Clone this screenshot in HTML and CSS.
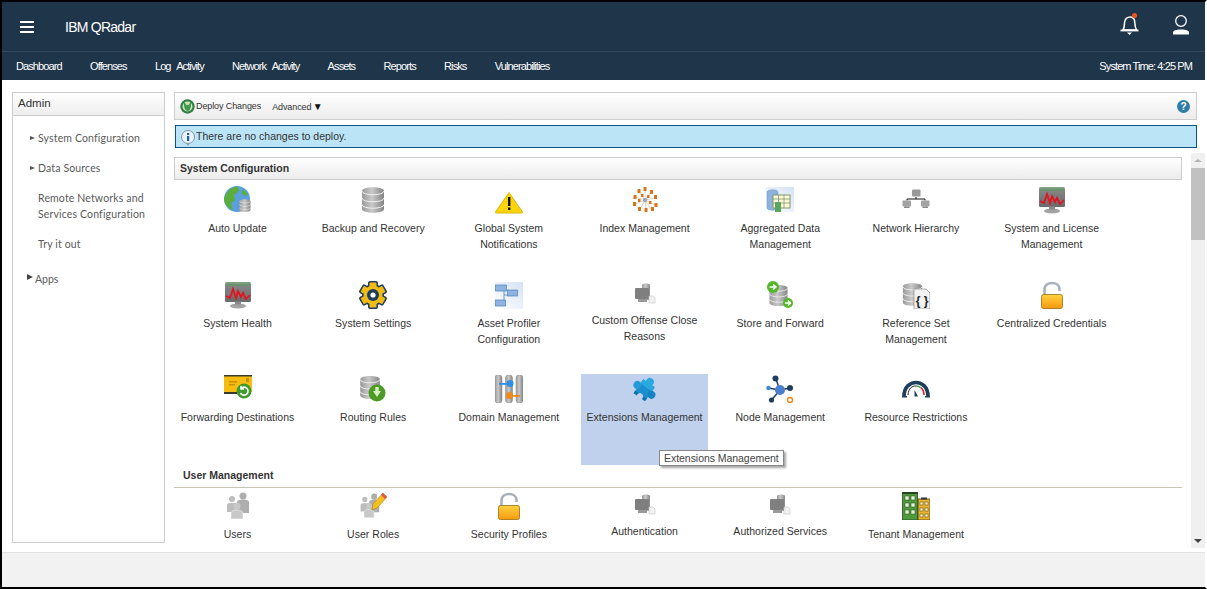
FILE: index.html
```html
<!DOCTYPE html>
<html lang="en">
<head>
<meta charset="utf-8">
<title>IBM QRadar</title>
<link rel="stylesheet" href="styles.css">
</head>
<body>
<svg class="defs" width="0" height="0" aria-hidden="true">
  <defs>
    <linearGradient id="gGrey" x1="0" x2="1" y1="0" y2="0"><stop offset="0" stop-color="#9a9a9a"/><stop offset=".45" stop-color="#c9c9c9"/><stop offset="1" stop-color="#858585"/></linearGradient>
    <linearGradient id="gLock" x1="0" x2="0" y1="0" y2="1"><stop offset="0" stop-color="#ffd23f"/><stop offset="1" stop-color="#f59a0e"/></linearGradient>
    <linearGradient id="gPale" x1="0" x2="1" y1="1" y2="0"><stop offset="0" stop-color="#ffffff"/><stop offset="1" stop-color="#d5e3f5"/></linearGradient>
    <linearGradient id="gMon" x1="0" x2="0" y1="0" y2="1"><stop offset="0" stop-color="#7fa583"/><stop offset=".2" stop-color="#848484"/><stop offset="1" stop-color="#6a6a6a"/></linearGradient>

    <symbol id="cyl" viewBox="0 0 24 28">
      <path d="M1 5C1 0 23 0 23 5V23C23 28 1 28 1 23Z" fill="url(#gGrey)"/>
      <path d="M1 5C1 10 23 10 23 5M1 12C1 17 23 17 23 12M1 18.500C1 23.500 23 23.500 23 18.500" fill="none" stroke="#f0f0f0" stroke-width="1"/>
    </symbol>
    <symbol id="i-globe" viewBox="0 0 28 28">
      <circle cx="13" cy="13" r="13" fill="#5aa0dc"/>
      <path d="M3 7C6 2 11 0 14 1L15 5 10 9 11 14 7 17 9 24C5 23 0 18 0 13 0 11 2 8 3 7Z" fill="#5cae3c"/>
      <path d="M18 3L24 8 21 10 18 8Z" fill="#5cae3c"/>
      <use href="#cyl" x="15" y="12" width="12" height="15"/>
    </symbol>
    <symbol id="i-db" viewBox="0 0 28 28"><use href="#cyl" x="2" y="0" width="24" height="28"/></symbol>
    <symbol id="i-warn" viewBox="0 0 28 28">
      <path d="M14 6.500L27.500 26Q28 27 26.500 27H1.500Q0 27 .5 26Z" fill="#fbd40a" stroke="#d8b60c"/>
      <rect x="13" y="11" width="2.400" height="9" fill="#111"/><rect x="13" y="21.500" width="2.400" height="2.500" fill="#111"/>
    </symbol>
    <symbol id="i-index" viewBox="0 0 28 28">
      <g stroke="#c9b8a8" stroke-width=".6"><path d="M14 14L14 4M14 14L8 6M14 14L20 6M14 14L4 11M14 14L24 12M14 14L4 18M14 14L24 19M14 14L9 23M14 14L15 24M14 14L20 23"/></g>
      <g fill="#d9741c"><rect x="12.500" y="1" width="3" height="4"/><rect x="6.500" y="3" width="3" height="4"/><rect x="19" y="4" width="3" height="4"/><rect x="2.500" y="9" width="3" height="4"/><rect x="23" y="9" width="3" height="4"/><rect x="2" y="16" width="3" height="4"/><rect x="23.500" y="17" width="3" height="4"/><rect x="7" y="21" width="3" height="4"/><rect x="13.500" y="22" width="3" height="4"/><rect x="20" y="21" width="3" height="4"/><rect x="10" y="8" width="2.500" height="3"/><rect x="16" y="9" width="2.500" height="3"/><rect x="7" y="13" width="2.500" height="3"/><rect x="18" y="15" width="2.500" height="3"/></g>
      <circle cx="14" cy="14" r="2.200" fill="#9aa7c2"/>
    </symbol>
    <symbol id="i-agg" viewBox="0 0 28 28">
      <rect x="0" y="1" width="28" height="25" fill="url(#gPale)"/>
      <path d="M1 6C1 3 12 3 12 6V22C12 25 1 25 1 22Z" fill="#8db3dc" stroke="#6f96c4" stroke-width=".5"/>
      <rect x="7" y="9" width="17" height="13" fill="#fff8d8" stroke="#7d9a70"/>
      <path d="M7 13H24M7 17H24M12.500 9V22M18 9V22" stroke="#7d9a70" stroke-width=".8"/>
      <rect x="9" y="16" width="6" height="10" fill="#58a55c"/>
    </symbol>
    <symbol id="i-net" viewBox="0 0 28 28">
      <path d="M14 11V13M5 14.500V13H23V14.500" fill="none" stroke="#111" stroke-width="1"/>
      <rect x="10" y="3.500" width="8.500" height="7" rx="1" fill="#9a9a9a"/>
      <rect x="0.500" y="14.500" width="8.500" height="6" rx="1" fill="#a2a2a2"/><rect x="2" y="20.500" width="5.500" height="1.500" fill="#8a8a8a"/>
      <rect x="19" y="14.500" width="8.500" height="6" rx="1" fill="#a2a2a2"/><rect x="20.500" y="20.500" width="5.500" height="1.500" fill="#8a8a8a"/>
    </symbol>
    <symbol id="i-mon" viewBox="0 0 28 28">
      <rect x="1" y="1" width="26" height="20" rx="1.500" fill="url(#gMon)"/>
      <rect x="2" y="3.500" width="24" height="1" fill="#4f9a52"/>
      <path d="M2 15L6 17 9 8 12 17 14 10 17 16 19 12 22 18 26 14" fill="none" stroke="#e8101c" stroke-width="1.700"/>
      <ellipse cx="14" cy="25" rx="8" ry="2.500" fill="#a3a3a3"/><rect x="11" y="20.500" width="6" height="3" fill="#8a8a8a"/>
    </symbol>
    <symbol id="i-gear" viewBox="0 0 28 28">
      <g fill="#1f3e5e"><circle cx="14" cy="14" r="11"/><rect x="9" y="0" width="10" height="28" rx="2"/><rect x="9" y="0" width="10" height="28" rx="2" transform="rotate(60 14 14)"/><rect x="9" y="0" width="10" height="28" rx="2" transform="rotate(120 14 14)"/></g>
      <g fill="#f1bb16"><circle cx="14" cy="14" r="9.500"/><rect x="10.500" y="1.500" width="7" height="25" rx="1"/><rect x="10.500" y="1.500" width="7" height="25" rx="1" transform="rotate(60 14 14)"/><rect x="10.500" y="1.500" width="7" height="25" rx="1" transform="rotate(120 14 14)"/></g>
      <circle cx="14" cy="14" r="6" fill="#1f3e5e"/><circle cx="14" cy="14" r="2.600" fill="#fff"/>
    </symbol>
    <symbol id="i-asset" viewBox="0 0 28 28">
      <rect x="0" y="1" width="28" height="27" fill="url(#gPale)"/>
      <path d="M9 9V22H5M9 14H13" fill="none" stroke="#4f7fb8" stroke-width=".8"/>
      <rect x="0.500" y="4" width="11" height="6" fill="#8fb4e2" stroke="#4f7fb8" stroke-width=".7"/>
      <rect x="12.500" y="9" width="10" height="6" fill="#8fb4e2" stroke="#4f7fb8" stroke-width=".7"/>
      <rect x="0.500" y="19" width="10" height="6" fill="#8fb4e2" stroke="#4f7fb8" stroke-width=".7"/>
    </symbol>
    <symbol id="i-small" viewBox="0 0 28 28">
      <path d="M11 4C11 2 19 2 19 4V19H11Z" fill="url(#gGrey)"/>
      <rect x="4" y="7" width="14" height="11" rx="1" fill="#7f7f7f"/><rect x="7" y="18" width="9" height="3" fill="#999"/>
      <path d="M18 15H22L24 17V22H18Z" fill="#f1f1f1" stroke="#c4c4c4" stroke-width=".6"/>
    </symbol>
    <symbol id="i-store" viewBox="0 0 28 28">
      <use href="#cyl" x="2" y="3" width="21" height="23"/>
      <circle cx="7" cy="6" r="6" fill="#55b62b"/><path d="M3.500 6H9M7 3.500L10 6 7 8.500" fill="none" stroke="#fff" stroke-width="1.500"/>
      <circle cx="22" cy="22" r="5" fill="#55b62b"/><path d="M19 22H24M22 19.500L24.500 22 22 24.500" fill="none" stroke="#fff" stroke-width="1.400"/>
    </symbol>
    <symbol id="i-ref" viewBox="0 0 28 28">
      <use href="#cyl" x="0" y="0" width="21" height="27"/>
      <path d="M12 8H24L28 12V28H12Z" fill="#f2f2f2" stroke="#9a9a9a" stroke-width=".8"/>
      <text x="20" y="24" class="brace">{ }</text>
    </symbol>
    <symbol id="i-lock" viewBox="0 0 28 28">
      <path d="M6.500 14V8C6.500 0 21.500 0 21.500 8V10" fill="none" stroke="#aab0bb" stroke-width="2.600"/>
      <rect x="3.500" y="13.500" width="21" height="14" rx="2" fill="url(#gLock)" stroke="#9a6a12" stroke-width=".8"/>
    </symbol>
    <symbol id="i-env" viewBox="0 0 28 28">
      <rect x="0" y="0" width="28" height="17" fill="#f5bd12"/><rect x="0" y="0" width="28" height="1.500" fill="#3a3a2a"/>
      <rect x="0" y="17" width="18" height="2" fill="#3a3a2a"/><rect x="5" y="6" width="8" height="1.500" fill="#c98f10"/><rect x="5" y="9" width="6" height="1.500" fill="#c98f10"/><rect x="22" y="3" width="3" height="4" fill="#c98f10"/>
      <circle cx="20" cy="16" r="7.500" fill="#3f9b2c"/><path d="M16.500 18A4 4 0 1 0 17 13.500M17 11V14H20" fill="none" stroke="#fff" stroke-width="1.600"/>
    </symbol>
    <symbol id="i-route" viewBox="0 0 28 28">
      <use href="#cyl" x="0" y="0" width="22" height="25"/>
      <circle cx="18" cy="18" r="8.500" fill="#4d9a26"/><path d="M14 16H22L18 22Z" fill="#d8f0c0"/><rect x="16.300" y="12" width="3.400" height="4" fill="#d8f0c0"/>
    </symbol>
    <symbol id="i-domain" viewBox="0 0 28 28">
      <rect x="0" y="0" width="7" height="28" rx="3" fill="url(#gGrey)" stroke="#888" stroke-width=".5"/>
      <rect x="10.500" y="0" width="7" height="28" rx="3" fill="url(#gGrey)" stroke="#888" stroke-width=".5"/>
      <rect x="21" y="0" width="7" height="28" rx="3" fill="url(#gGrey)" stroke="#888" stroke-width=".5"/>
      <rect x="4" y="8" width="11" height="1.800" fill="#2f8fe6"/><circle cx="15" cy="8.500" r="3.500" fill="#2f8fe6"/>
      <rect x="14" y="20" width="11" height="1.800" fill="#f08a1d"/><circle cx="14.500" cy="20.500" r="3.500" fill="#f08a1d"/>
    </symbol>
    <symbol id="i-puzzle" viewBox="0 0 28 28">
      <g transform="rotate(35 14 14)">
        <rect x="7" y="7" width="14" height="16" fill="#1a8fd0"/>
        <rect x="7" y="7" width="14" height="5" fill="#2aa8e0"/>
        <circle cx="14" cy="5.500" r="4" fill="#2aa8e0"/>
        <circle cx="5.500" cy="15" r="4" fill="#2299d8"/>
        <circle cx="22.500" cy="15" r="4" fill="#1583c2"/>
        <rect x="7" y="21" width="14" height="3" fill="#0f6fae"/>
        <circle cx="14" cy="23" r="3.200" fill="#bfd1ec"/>
      </g>
    </symbol>
    <symbol id="i-node" viewBox="0 0 28 28">
      <path d="M14 15L9.500 3M14 15L24 13M14 15L2 13M14 15L5.500 25" stroke="#1f3e5e" stroke-width="1.500"/>
      <circle cx="14" cy="15" r="5" fill="#4a7fd0"/><circle cx="9.500" cy="3.500" r="3" fill="#1f3e5e"/><circle cx="24" cy="13" r="3" fill="#1f3e5e"/><circle cx="2.500" cy="13" r="2.300" fill="#3f8fd0"/><circle cx="5.500" cy="25" r="2.600" fill="#1f3e5e"/>
      <circle cx="24" cy="25" r="2.500" fill="none" stroke="#ee8a1a" stroke-width="1.500"/>
    </symbol>
    <symbol id="i-gauge" viewBox="0 0 28 28">
      <path d="M2 21C2 3 26 3 26 21" fill="none" stroke="#1f3e5e" stroke-width="3.600"/>
      <path d="M6 20C6.500 13 10 11 14 11" fill="none" stroke="#222" stroke-width="1"/>
      <path d="M14 11C16 11 17.500 11.500 19 12.800" fill="none" stroke="#49a84a" stroke-width="1.500"/>
      <path d="M19 12.800C21 14.500 22 17 22 20" fill="none" stroke="#d8232a" stroke-width="1.500"/>
      <path d="M12.500 15L16 21.500H12.500Z" fill="#1f3e5e"/>
      <rect x="0" y="21" width="5" height="1.500" fill="#1f3e5e"/><rect x="23" y="21" width="5" height="1.500" fill="#1f3e5e"/>
    </symbol>
    <symbol id="i-users" viewBox="0 0 28 28">
      <g fill="#bdbdbd"><circle cx="8" cy="7" r="3"/><path d="M3 20V13C3 10 13 10 13 13V20Z"/></g>
      <g fill="#aeaeae"><circle cx="19" cy="4" r="3.500"/><path d="M13 21V10C13 6.500 25 6.500 25 10V21Z"/></g>
      <g fill="#c8c8c8"><circle cx="13" cy="14" r="3.500"/><path d="M7 27V21C7 17 19 17 19 21V27Z" stroke="#fff" stroke-width=".5"/></g>
    </symbol>
    <symbol id="i-roles" viewBox="0 0 28 28">
      <g transform="translate(-1 1) scale(.85 .92)"><g fill="#bdbdbd"><circle cx="8" cy="7" r="3"/><path d="M3 20V13C3 10 13 10 13 13V20Z"/></g><g fill="#aeaeae"><circle cx="19" cy="4" r="3.500"/><path d="M13 21V10C13 6.500 25 6.500 25 10V21Z"/></g><g fill="#c8c8c8"><circle cx="13" cy="14" r="3.500"/><path d="M7 27V21C7 17 19 17 19 21V27Z" stroke="#fff" stroke-width=".5"/></g></g>
      <path d="M24 1L28 5 18 16 13 18 14 12Z" fill="#f5c21b" stroke="#b07a20" stroke-width=".6"/><path d="M24 1L28 5 26 7 22 3Z" fill="#e2574c"/>
    </symbol>
    <symbol id="i-tenant" viewBox="0 0 28 28">
      <rect x="16" y="7" width="12" height="21" fill="#eab52c" stroke="#4a3a10" stroke-width=".8"/>
      <rect x="19" y="5.500" width="6" height="2" fill="#333"/>
      <g fill="#fff4c8" stroke="#4a3a10" stroke-width=".5"><rect x="18" y="10" width="3" height="3"/><rect x="23" y="10" width="3" height="3"/><rect x="18" y="16" width="3" height="3"/><rect x="23" y="16" width="3" height="3"/><rect x="18" y="22" width="3" height="3"/><rect x="23" y="22" width="3" height="3"/></g>
      <rect x="0.500" y="1" width="15" height="27" fill="#4f9a3c" stroke="#24461c" stroke-width=".8"/><rect x="0" y="0" width="16" height="2" fill="#24461c"/>
      <g fill="#e5f2d8" stroke="#24461c" stroke-width=".5"><rect x="3" y="4" width="4" height="4"/><rect x="9" y="4" width="4" height="4"/><rect x="3" y="11" width="4" height="4"/><rect x="9" y="11" width="4" height="4"/><rect x="3" y="18" width="4" height="4"/><rect x="9" y="18" width="4" height="4"/></g>
    </symbol>
  </defs>
</svg>

<div class="frame">
  <header class="topbar">
    <div class="burger"><span></span><span></span><span></span></div>
    <div class="brand">IBM QRadar</div>
    <div class="top-icons">
      <svg class="bell" width="24" height="24" viewBox="0 0 24 24">
        <path d="M5 18C7 15 6 11 7 8.500 8 5 13.500 3.500 16 7 17.500 9 16 14 18.500 18Z" fill="none" stroke="#fff" stroke-width="1.500"/>
        <path d="M2.500 18.500H20.500" stroke="#fff" stroke-width="1.800"/><path d="M9 20.500H14L11.500 23Z" fill="#fff"/>
        <circle cx="16.500" cy="3.500" r="2.600" fill="#e8551c"/>
      </svg>
      <svg class="user" width="18" height="20" viewBox="0 0 18 20">
        <circle cx="9" cy="6" r="5.300" fill="none" stroke="#fff" stroke-width="1.300"/>
        <path d="M1 19.500V17.500C1 15.500 4 14.500 9 14.500S17 15.500 17 17.500V19.500Z" fill="#fff"/>
      </svg>
    </div>
  </header>
  <nav class="navbar">
    <a>Dashboard</a><a>Offenses</a><a>Log Activity</a><a>Network Activity</a><a>Assets</a><a>Reports</a><a>Risks</a><a>Vulnerabilities</a>
    <span class="time">System Time: 4:25 PM</span>
  </nav>

  <main class="main">
    <aside class="sidebar">
      <div class="side-head">Admin</div>
      <ul class="side-list">
        <li class="arrow">System Configuration</li>
        <li class="arrow">Data Sources</li>
        <li>Remote Networks and<br>Services Configuration</li>
        <li>Try it out</li>
      </ul>
      <div class="side-apps">Apps</div>
    </aside>

    <section class="content">
      <div class="toolbar">
        <svg class="deploy" width="15" height="15" viewBox="0 0 15 15"><circle cx="7.500" cy="7.500" r="7.200" fill="#2f7f46"/><circle cx="7.500" cy="7.500" r="5" fill="#cfe8b0"/><path d="M4 2.500C3.500 8 5 11.500 7.500 12S11.500 8 11 2.500L8.500 6H6.500Z" fill="#3f9a55"/></svg>
        <span class="tool">Deploy Changes</span>
        <span class="tool tool-adv">Advanced <b>▼</b></span>
        <svg class="help" width="13" height="13" viewBox="0 0 13 13"><circle cx="6.500" cy="6.500" r="6.500" fill="#2f7ea8"/><text x="6.500" y="10" class="q">?</text></svg>
      </div>
      <div class="alert">
        <svg width="14" height="16" viewBox="0 0 14 16"><circle cx="7" cy="7" r="6.500" fill="#eaf4fb" stroke="#7f97ad"/><path d="M5 13L7 16 9 13Z" fill="#8aa0b4"/><rect x="6" y="6" width="2.200" height="5" fill="#1e5fa8"/><rect x="6" y="3" width="2.200" height="2" fill="#1e5fa8"/></svg>
        <span>There are no changes to deploy.</span>
      </div>

      <div class="body-row">
        <div class="viewport">
          <h2 class="sec-head">System Configuration</h2>
          <div class="grid grid-first">
            <a class="item"><svg class="ic"><use href="#i-globe"/></svg><span>Auto Update</span></a>
            <a class="item"><svg class="ic"><use href="#i-db"/></svg><span>Backup and Recovery</span></a>
            <a class="item"><svg class="ic"><use href="#i-warn"/></svg><span>Global System Notifications</span></a>
            <a class="item"><svg class="ic"><use href="#i-index"/></svg><span>Index Management</span></a>
            <a class="item"><svg class="ic"><use href="#i-agg"/></svg><span>Aggregated Data Management</span></a>
            <a class="item"><svg class="ic"><use href="#i-net"/></svg><span>Network Hierarchy</span></a>
            <a class="item"><svg class="ic"><use href="#i-mon"/></svg><span>System and License Management</span></a>

            <a class="item"><svg class="ic"><use href="#i-mon"/></svg><span>System Health</span></a>
            <a class="item"><svg class="ic"><use href="#i-gear"/></svg><span>System Settings</span></a>
            <a class="item"><svg class="ic"><use href="#i-asset"/></svg><span>Asset Profiler Configuration</span></a>
            <a class="item item-small"><svg class="ic"><use href="#i-small"/></svg><span>Custom Offense Close Reasons</span></a>
            <a class="item"><svg class="ic"><use href="#i-store"/></svg><span>Store and Forward</span></a>
            <a class="item"><svg class="ic"><use href="#i-ref"/></svg><span>Reference Set Management</span></a>
            <a class="item"><svg class="ic"><use href="#i-lock"/></svg><span>Centralized Credentials</span></a>

            <a class="item"><svg class="ic"><use href="#i-env"/></svg><span>Forwarding Destinations</span></a>
            <a class="item"><svg class="ic"><use href="#i-route"/></svg><span>Routing Rules</span></a>
            <a class="item"><svg class="ic"><use href="#i-domain"/></svg><span>Domain Management</span></a>
            <a class="item item-active"><svg class="ic"><use href="#i-puzzle"/></svg><span>Extensions Management</span><em class="tooltip">Extensions Management</em></a>
            <a class="item"><svg class="ic"><use href="#i-node"/></svg><span>Node Management</span></a>
            <a class="item"><svg class="ic"><use href="#i-gauge"/></svg><span>Resource Restrictions</span></a>
          </div>
          <h2 class="sub-head">User Management</h2>
          <div class="grid grid-users">
            <a class="item"><svg class="ic"><use href="#i-users"/></svg><span>Users</span></a>
            <a class="item"><svg class="ic"><use href="#i-roles"/></svg><span>User Roles</span></a>
            <a class="item"><svg class="ic"><use href="#i-lock"/></svg><span>Security Profiles</span></a>
            <a class="item item-small"><svg class="ic"><use href="#i-small"/></svg><span>Authentication</span></a>
            <a class="item item-small"><svg class="ic"><use href="#i-small"/></svg><span>Authorized Services</span></a>
            <a class="item"><svg class="ic"><use href="#i-tenant"/></svg><span>Tenant Management</span></a>
          </div>
        </div>
        <div class="scrollbar">
          <i class="up"></i>
          <div class="thumb"></div>
          <i class="down"></i>
        </div>
      </div>
    </section>
  </main>
  <footer class="footer"></footer>
</div>
</body>
</html>
```
FILE: styles.css
```css
* { box-sizing: border-box; }
html, body { margin: 0; padding: 0; background: #fff; }
body { font-family: "Liberation Sans", Arial, sans-serif; overflow: hidden; }
.defs { position: absolute; }
.brace { font: 700 12px "Liberation Sans", sans-serif; fill: #222; text-anchor: middle; }
.q { font: 700 10px "Liberation Sans", sans-serif; fill: #fff; text-anchor: middle; }

.frame {
  width: 1207px; height: 589px;
  border-top: 2px solid #000; border-left: 2px solid #000; border-bottom: 2px solid #000; border-right: 2px solid #fff;
  display: flex; flex-direction: column;
  background: #fff;
}

.topbar {
  height: 50px; flex: none;
  background: #1f3549; border-bottom: 1px solid #2f4a60;
  display: flex; align-items: center; color: #fff;
  padding-left: 18px;
}
.burger { width: 14px; display: flex; flex-direction: column; gap: 2.500px; margin-top: 1px; }
.burger span { height: 2.500px; background: #fff; display: block; }
.brand { margin-left: 31px; font-size: 14px; letter-spacing: -.75px; font-weight: 400; margin-top: 1px; }
.top-icons { margin-left: auto; display: flex; align-items: center; padding-right: 15px; }
.bell { margin-right: 30px; margin-top: -5px; }
.user { margin-top: -4px; }

.navbar {
  height: 28px; flex: none;
  background: #1f3549; color: #fff;
  display: flex; align-items: center;
  font-size: 11px; letter-spacing: -.9px;
  padding: 0 13px 0 14px; gap: 28.300px;
}
.navbar a { word-spacing: 4px; }
.time { margin-left: auto; }

.main { flex: 1; display: flex; min-height: 0; }

.sidebar {
  width: 153px; height: 451px; flex: none;
  margin: 12px 9px 0 10px;
  border: 1px solid #ccc;
  color: #5a5a5a;
  font-family: Lato, sans-serif;
}
.side-head {
  height: 23px; border-bottom: 1px solid #ccc;
  background: linear-gradient(#fff, #eee);
  font: 11.500px/21px "Liberation Sans", sans-serif; color: #333;
  padding-left: 5px;
}
.side-list { list-style: none; margin: 0; padding: 14px 0 0 25px; font-size: 10.500px; line-height: 16px; letter-spacing: .15px; }
.side-list li { margin-bottom: 14px; position: relative; }
.arrow::before {
  content: ""; position: absolute; left: -8px; top: 6px;
  border-left: 5px solid #555; border-top: 2.500px solid transparent; border-bottom: 2.500px solid transparent;
}
.side-apps { position: relative; padding-left: 22px; font-size: 10.500px; margin-top: 20px; line-height: 14px; }
.side-apps::before {
  content: ""; position: absolute; left: 14px; top: 2px;
  border-left: 6px solid #444; border-top: 3.500px solid transparent; border-bottom: 3.500px solid transparent;
}

.content { flex: 1; min-width: 0; padding-top: 12px; padding-bottom: 4px; display: flex; flex-direction: column; }
.toolbar {
  height: 28px; flex: none; margin-right: 8px;
  border: 1px solid #ccc; background: linear-gradient(#fff, #ececec);
  display: flex; align-items: center; padding-left: 5px;
  font-size: 9px; color: #333; letter-spacing: -.1px;
}
.tool { margin-left: 1px; }
.tool-adv { margin-left: 11px; }
.tool-adv b { font-size: 10px; margin-left: -1px; color: #111; }
.help { margin-left: auto; margin-right: 6px; }
.alert {
  height: 23px; flex: none; margin: 5px 8px 0 1px;
  border: 1px solid #0c5285; background: #bce4f7;
  display: flex; align-items: center; padding-left: 5px; gap: 1px;
  font-size: 10.500px; letter-spacing: 0; color: #333;
}
.alert span { margin-top: -2px; }
.alert svg { margin-top: 2px; }

.body-row { flex: 1; display: flex; min-height: 0; margin-top: 5px; }
.viewport { width: 1017px; padding-top: 4px; overflow: hidden; position: relative; }
.sec-head {
  width: 1008px; height: 23px; margin: 0;
  border: 1px solid #ccc; background: linear-gradient(#fff, #ececec);
  font-size: 10.500px; line-height: 21px; font-weight: 700; color: #333;
  padding-left: 5px;
}
.grid { display: grid; grid-template-columns: repeat(7, 127px); column-gap: 8.700px; row-gap: 3.500px; grid-auto-rows: 91px; }
.grid-first { padding-top: 5px; }
.sub-head {
  width: 1008px; height: 22.500px; margin: 0;
  border-bottom: 1px solid #c9c5b5;
  font-size: 10.500px; line-height: 14px; font-weight: 700; color: #333;
  padding: 3px 0 0 9px;
}
.grid-users { padding-top: 3px; }

.item {
  position: relative; display: flex; flex-direction: column; align-items: center;
  padding: 1px 3px 0; text-align: center;
  font-size: 10.500px; line-height: 16px; color: #333; letter-spacing: .02px;
}
.ic { width: 28px; height: 28px; flex: none; margin-bottom: 6px; }
.item-small .ic { margin-bottom: 3px; }
.item-active { background: #bfd1ec; overflow: visible; }
.tooltip {
  position: absolute; left: 78px; top: 76px; z-index: 2;
  white-space: nowrap; font-style: normal;
  height: 16px; line-height: 14px; padding: 0 4px;
  background: #fff; border: 1px solid #888;
  box-shadow: 2px 2px 2px rgba(0,0,0,.35);
  color: #444; font-size: 10.500px; letter-spacing: -.05px;
}

.scrollbar { width: 14px; flex: none; background: #f0f0f0; position: relative; }
.thumb { position: absolute; left: 0; right: 0; top: 15px; height: 72px; background: #c1c1c1; }
.up, .down { position: absolute; left: 3px; width: 0; height: 0; border-left: 4px solid transparent; border-right: 4px solid transparent; }
.up { top: 6px; border-bottom: 3px solid #b5b5b5; }
.down { bottom: 5px; border-top: 4px solid #444; }

.footer { height: 35px; flex: none; background: #f2f2f2; border-top: 1px solid #e2e2e2; }
```
